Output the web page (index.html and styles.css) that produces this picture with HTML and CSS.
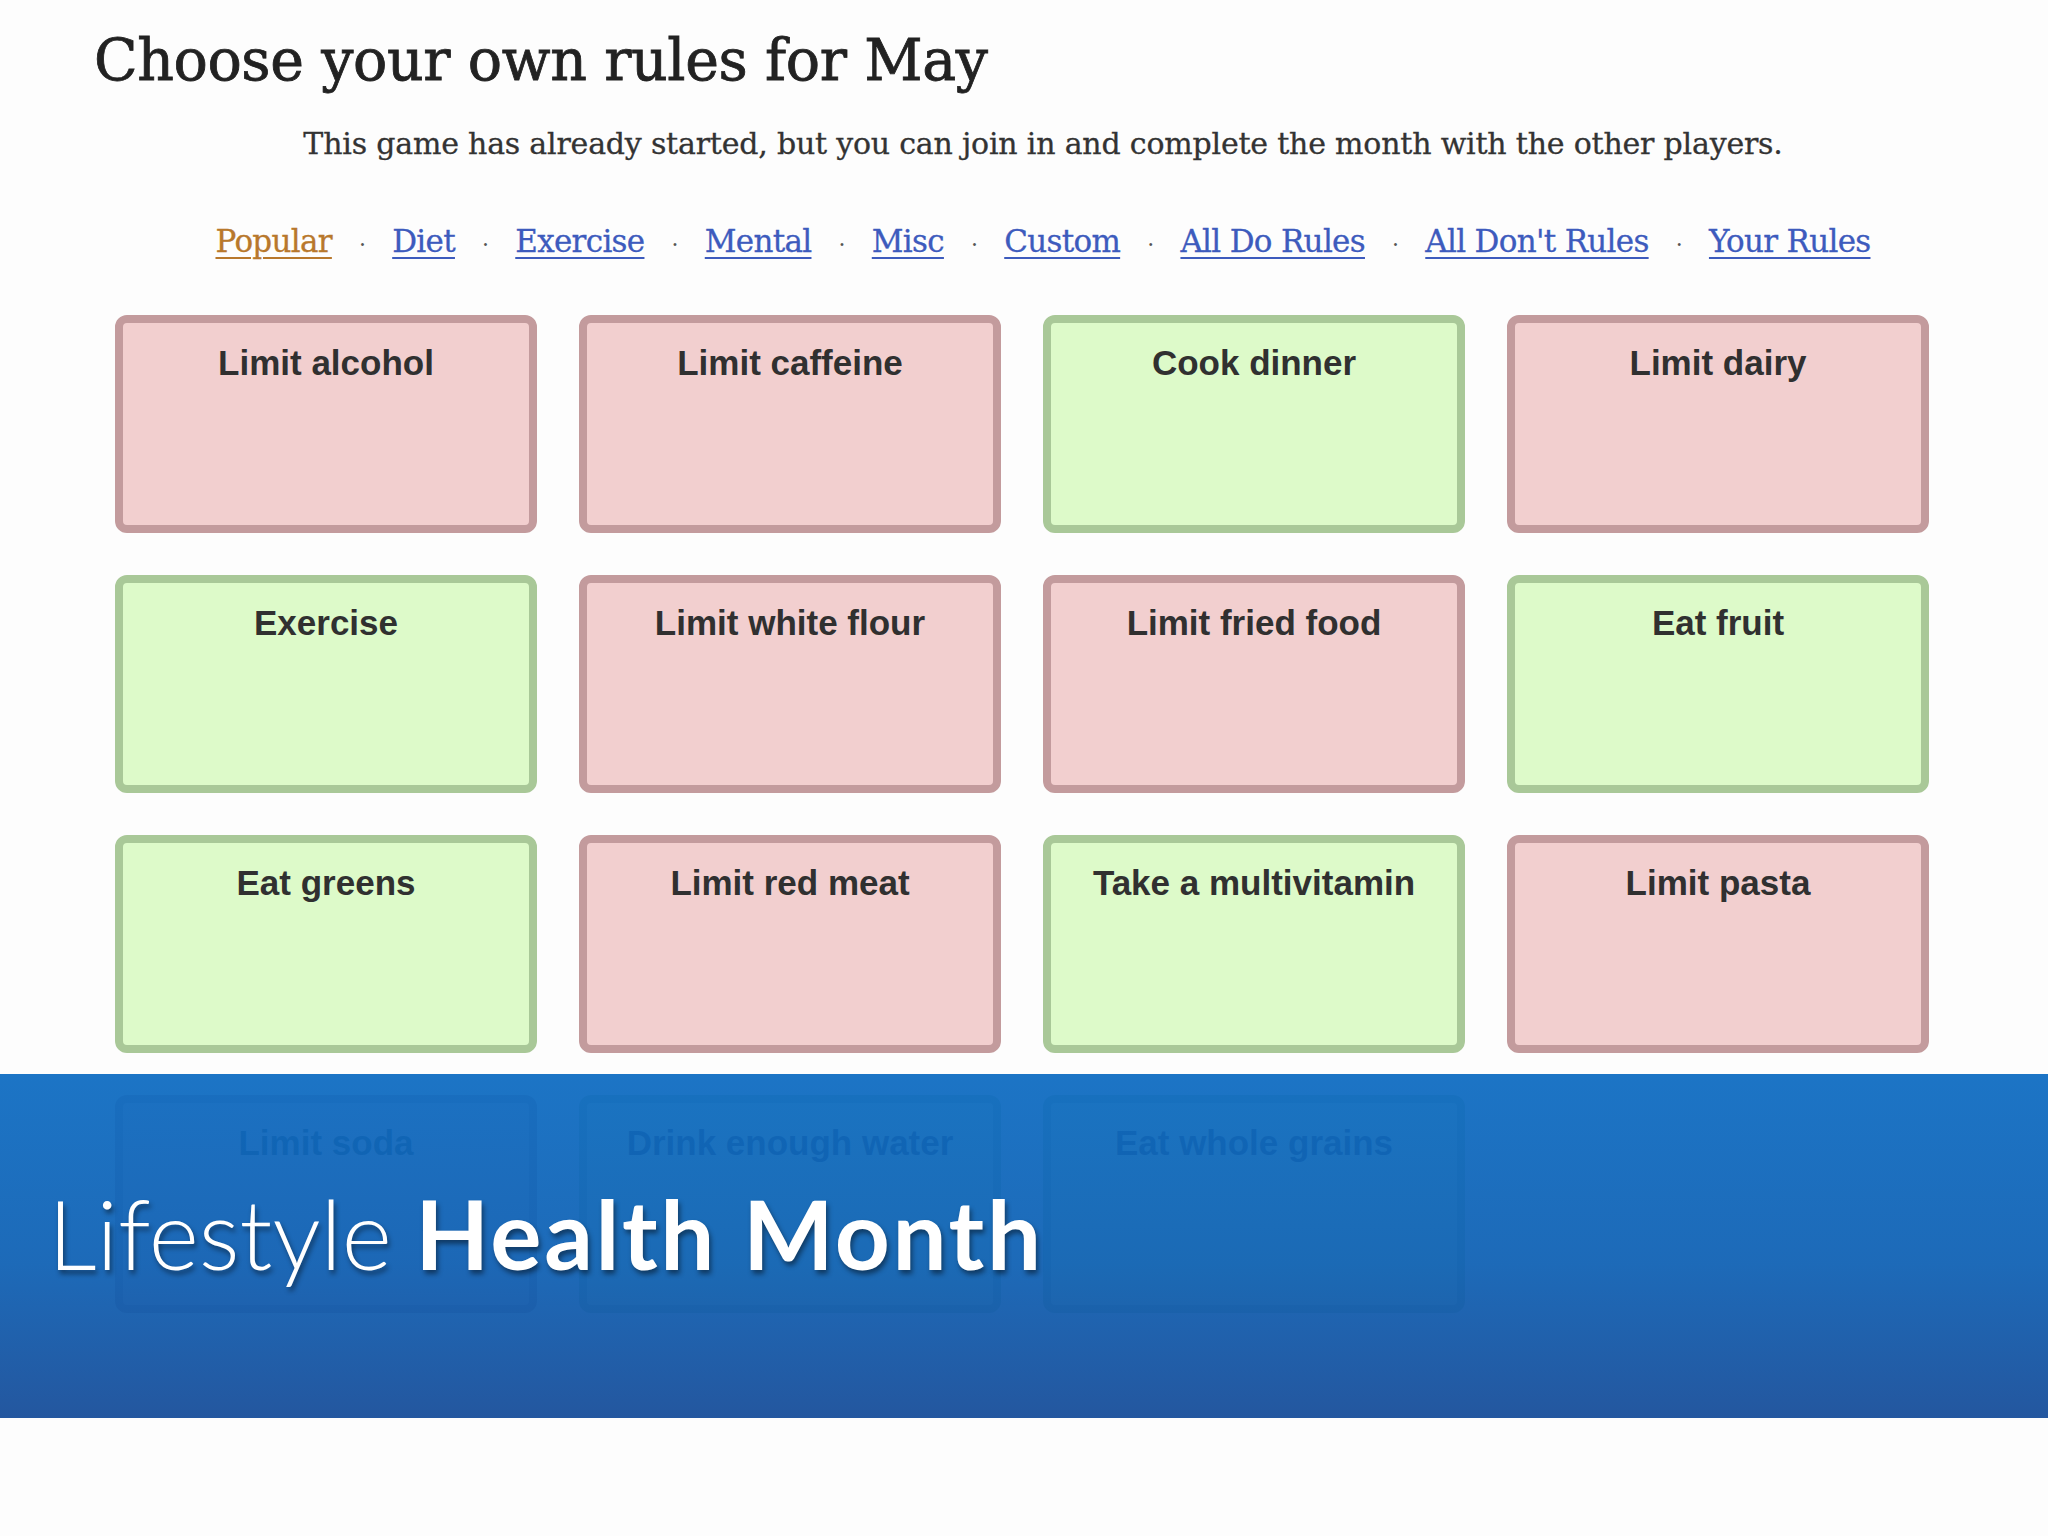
FILE: index.html
```html
<!DOCTYPE html>
<html>
<head>
<meta charset="utf-8">
<link rel="stylesheet" href="styles.css">
</head>
<body>
<div class="page">
  <h1 class="title">Choose your own rules for May</h1>
  <p class="subtitle">This game has already started, but you can join in and complete the month with the other players.</p>
  <nav class="nav">
    <a class="link active">Popular</a><span class="dot">·</span>
    <a class="link">Diet</a><span class="dot">·</span>
    <a class="link">Exercise</a><span class="dot">·</span>
    <a class="link">Mental</a><span class="dot">·</span>
    <a class="link">Misc</a><span class="dot">·</span>
    <a class="link">Custom</a><span class="dot">·</span>
    <a class="link">All Do Rules</a><span class="dot">·</span>
    <a class="link">All Don't Rules</a><span class="dot">·</span>
    <a class="link">Your Rules</a>
  </nav>
  <div class="grid">
    <div class="card dont">Limit alcohol</div>
    <div class="card dont">Limit caffeine</div>
    <div class="card do">Cook dinner</div>
    <div class="card dont">Limit dairy</div>
    <div class="card do">Exercise</div>
    <div class="card dont">Limit white flour</div>
    <div class="card dont">Limit fried food</div>
    <div class="card do">Eat fruit</div>
    <div class="card do">Eat greens</div>
    <div class="card dont">Limit red meat</div>
    <div class="card do">Take a multivitamin</div>
    <div class="card dont">Limit pasta</div>
    <div class="card dont">Limit soda</div>
    <div class="card do">Drink enough water</div>
    <div class="card do">Eat whole grains</div>
  </div>
</div>
<div class="banner">
  <h2 class="banner-title"><span class="light">Lifestyle</span> <span class="bold">Health Month</span></h2>
</div>
</body>
</html>
```

FILE: styles.css
```css
html, body {
  margin: 0;
  padding: 0;
  background: #fdfdfd;
  width: 2048px;
  height: 1536px;
  overflow: hidden;
}

.page {
  padding: 0;
}

.title {
  margin: 0;
  padding: 24px 0 0 94px;
  font-family: "DejaVu Serif", serif;
  font-weight: normal;
  font-size: 57px;
  line-height: 72px;
  color: #222;
  letter-spacing: -0.4px;
  -webkit-text-stroke: 0.8px #222;
}

.subtitle {
  margin: 28px 0 0 0;
  padding-left: 38px;
  text-align: center;
  font-family: "DejaVu Serif", serif;
  font-size: 30px;
  line-height: 40px;
  color: #333;
  letter-spacing: -0.2px;
  -webkit-text-stroke: 0.3px #333;
}

.nav {
  display: flex;
  justify-content: center;
  align-items: baseline;
  gap: 27px;
  margin: 57px 0 0 0;
  padding-left: 38px;
  font-family: "DejaVu Serif", serif;
  font-size: 31px;
  line-height: 40px;
  letter-spacing: -0.7px;
}

.link {
  color: #3d5bbd;
  text-decoration: underline;
  text-underline-offset: 5px;
  text-decoration-thickness: 2px;
  -webkit-text-stroke: 0.3px currentColor;
}

.link.active {
  color: #b8782c;
}

.dot {
  color: #555;
  font-size: 22px;
}

.grid {
  display: grid;
  grid-template-columns: repeat(4, 422px);
  grid-auto-rows: 218px;
  column-gap: 42px;
  row-gap: 42px;
  margin: 50px 0 0 115px;
}

.card {
  box-sizing: border-box;
  border: 8px solid;
  border-radius: 12px;
  padding-top: 18px;
  text-align: center;
  font-family: "Liberation Sans", Arial, sans-serif;
  font-weight: bold;
  font-size: 35px;
  line-height: 44px;
  color: #303030;
}

.card.dont {
  background: #f2cfcf;
  border-color: #c39b9d;
}

.card.do {
  background: #ddfac9;
  border-color: #a9c898;
}

.banner {
  position: absolute;
  left: 0;
  top: 1074px;
  width: 2048px;
  height: 344px;
  background: linear-gradient(to bottom, rgba(14, 108, 194, 0.94) 0%, rgba(15, 97, 180, 0.94) 55%, rgba(24, 78, 154, 0.95) 100%);
  box-sizing: border-box;
  padding: 104px 0 0 48px;
}

.banner-title {
  margin: 0;
  font-family: Lato, "Open Sans", sans-serif;
  font-size: 96px;
  line-height: 110px;
  color: #fff;
  text-shadow: 2px 4px 5px rgba(0, 0, 0, 0.45);
  white-space: nowrap;
}

.banner-title .light {
  font-weight: 300;
}

.banner-title .bold {
  font-weight: 700;
  letter-spacing: 2.6px;
}
```
